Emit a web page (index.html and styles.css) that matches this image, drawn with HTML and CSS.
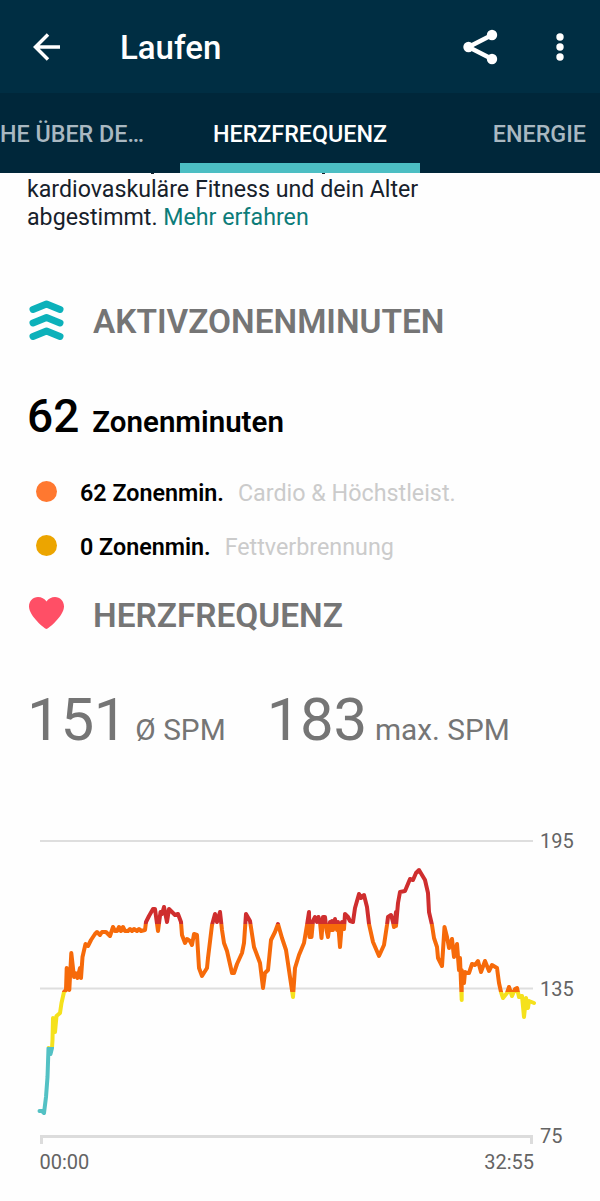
FILE: index.html
```
<!DOCTYPE html>
<html lang="de">
<head>
	<meta charset="UTF-8">
	<title>Laufen</title>
	<link rel="stylesheet" href="styles.css">
</head>
<body>
	<div class="header">
		<svg class="back" width="28" height="28" viewBox="0 0 28 28"><path d="M28 14H4M16 1.500L3.500 14L16 26.500"/></svg>
		<h1>Laufen</h1>
		<svg class="share" width="36" height="36" viewBox="0 0 36 36">
			<path d="M29 6L5.500 18L29 30"/>
			<circle cx="29" cy="6" r="5.200"/>
			<circle cx="5.500" cy="18" r="5.200"/>
			<circle cx="29" cy="30" r="5.200"/>
		</svg>
		<svg class="more" width="8" height="28" viewBox="0 0 8 28">
			<circle cx="4" cy="4" r="3.700"/>
			<circle cx="4" cy="14" r="3.700"/>
			<circle cx="4" cy="24" r="3.700"/>
		</svg>
	</div>
	<ul class="tabs">
		<li class="first">HE ÜBER DE…</li>
		<li class="current">HERZFREQUENZ</li>
		<li class="last">ENERGIE</li>
	</ul>
	<div class="content">
		<p class="info">kardiovaskuläre Fitness und dein Alter<br>abgestimmt. <a>Mehr erfahren</a></p>

		<div class="title zones">
			<svg width="40" height="44" viewBox="0 0 40 44">
				<path class="chevron" d="M6 10.500L19.500 5L33 10.500M6 24L19.500 18.500L33 24M6 37.500L19.500 32L33 37.500"/>
			</svg>
			<h2>AKTIVZONENMINUTEN</h2>
		</div>
		<p class="total"><b>62</b><span>Zonenminuten</span></p>
		<ul class="list">
			<li><i class="dot cardio"></i><b>62 Zonenmin.</b><span>Cardio &amp; Höchstleist.</span></li>
			<li><i class="dot fat"></i><b>0 Zonenmin.</b><span>Fettverbrennung</span></li>
		</ul>

		<div class="title heart">
			<svg width="40" height="36" viewBox="0 0 40 36">
				<path fill="#ff4f66" d="M19.500 33C18 33 2 20 2 10.500C2 5 6 1 11 1C14.500 1 17.500 2.500 19.500 5.500C21.500 2.500 24.500 1 28 1C33 1 37 5 37 10.500C37 20 21 33 19.500 33Z"/>
			</svg>
			<h2>HERZFREQUENZ</h2>
		</div>
		<div class="stats">
			<p><b>151</b><span>Ø SPM</span></p>
			<p><b>183</b><span>max. SPM</span></p>
		</div>

		<svg class="chart" width="600" height="371" viewBox="0 830 600 371">
			<defs>
				<!-- zone colours by heart rate -->
				<linearGradient id="zone" gradientUnits="userSpaceOnUse" x1="0" y1="824" x2="0" y2="1124">
					<stop offset="0.333" stop-color="#cf2e2e"/>
					<stop offset="0.333" stop-color="#f66a0a"/>
					<stop offset="0.560" stop-color="#f66a0a"/>
					<stop offset="0.560" stop-color="#f5e11c"/>
					<stop offset="0.743" stop-color="#f5e11c"/>
					<stop offset="0.743" stop-color="#53c1c4"/>
				</linearGradient>
			</defs>
			<path class="grid" d="M40 841H533M40 988.500H533"/>
			<path class="axis" d="M41.500 1144V1136.500H531.500V1144"/>
			<polyline class="rate" points="
				39.500,1111 42,1111 44,1113 46,1097 47.500,1077 48.500,1048 50.500,1054 52,1048
				52.500,1040 53,1018 55,1032 56.500,1016 60,1013 61.500,1003 64,992 66,990 66.700,968
				69.300,990 71.300,953 74,977 75.500,973 77.500,978 80,968 81,978 82.500,957 85.500,944
				88,946 91,940 95,934 97,932 100,935 102,932 106,932 110,936 113,927 115,931 117,931
				119,927 121,931 123,927 125,931 128,931 130,929 132,931 134,929 137,931 139,929 141,931
				145,930 146,922 149,916 153,909 155,909
				158,931 160.500,912 162,914 164,907 167,922 169,909 172,912 175,915 178,914 181,922
				182,935 185,943 187,939 190,941 192,945 194,934 197,935 199,968 202,976 207,968
				208,958 212,925 215,914 217,922 220,912 222,930 224,943 227,951 232,973 234,973
				237,964 242,953 244,943 246,914 250,921 254,947 260,963 263,988 265,973 268,970
				271,940 275,932 278,924 282,938 286,950 290,977 293,997 295,968 299,955 304,943
				307,925 309,912 309.500,937 311.500,937 313,921 315,917 317,922 318.500,917 320,922 321.500,938
				323,917 325,917 326.500,930 328,937 330,922 331,930 332,921 333,930 335,919 337,930 338,922 340,947
				342,922 344,929 345,914 348,917 350,921 353,922 355,908 359,894 361,898 364,895 367,907
				369,924 373,942 379,956 384,945 387,925 388,917 391,915 393,922 394,927 396,912 396,926 398,903
				400,892 405,891 410,879 413,880 416,873 419,870 422,875 425,880 428,893 429,912
				432,925 434,938 437,947 438,958 442,966 444.500,927 447,937 449,948 452,939 454,957
				457,944 459,970 460,958 461.700,1000 461.700,970 464,983 465,972 467,973 469,973 472,964 475,965 478,961
				481,972 485,961 489,971 492,965 497,968 499,983 501,992 503,998 507,993 509,987
				512,996 515,989 517,988 519,997 522,996 524,1017 526,998 528,1008 529,1001 534,1003"/>
			<g class="labels">
				<text x="540" y="848">195</text>
				<text x="540" y="995.500">135</text>
				<text x="540" y="1142.500">75</text>
				<text x="39.500" y="1168.500">00:00</text>
				<text x="534" y="1168.500" text-anchor="end">32:55</text>
			</g>
		</svg>
	</div>
</body>
</html>
```
FILE: styles.css
```
*{
	padding:0;
	margin:0;
	box-sizing: border-box;
}
body{
	width:600px;
	height:1201px;
	overflow: hidden;
	background:#fefefe;
	font-family: Roboto, "Liberation Sans", sans-serif;
	color:#000;
}
ul{
	list-style: none;
}
svg{
	display: block;
}
.header{
	display: flex;
	align-items: center;
	height:93px;
	padding:1px 36px 0 32px;
	background:#002e43;
	color:#fff;
}
.header svg{
	fill:#fff;
}
.header path{
	fill:none;
	stroke:#fff;
	stroke-width:3.5;
}
.header .share path{
	stroke-width:4.500;
}
.header h1{
	flex:1;
	padding:1px 0 0 60px;
	font-size: 33px;
	font-weight: 500;
}
.header .more{
	margin-left: 57px;
}
.tabs{
	display: flex;
	height:80px;
	background:#00273a;
	color:#a9b8c1;
	font-size: 23.3px;
	font-weight: 500;
	line-height: 82px;
	white-space: nowrap;
}
.tabs li{
	width:180px;
}
.tabs .current{
	width:240px;
	border-bottom:10px solid #4cbec3;
	color:#fff;
	text-align: center;
}
.tabs .last{
	padding-right: 14px;
	text-align: right;
}
.info{
	position: relative;
	height:122px;
	padding:3px 0 0 27px;
	font-size: 23.2px;
	line-height: 27.5px;
	color:#17212b;
}
/* tips of the line scrolled away under the tabs */
.info::before{
	content:"";
	position: absolute;
	left:151px;
	top:0;
	width:3px;
	height:1px;
	background:#17212b;
	box-shadow:171px 0 #17212b;
}
.info a{
	color:#0c7c79;
}
.title{
	display: flex;
	align-items: center;
	height:52px;
	padding-left: 27px;
	color:#757575;
}
.title h2{
	padding-left: 26px;
	font-size: 33.4px;
	font-weight: 600;
}
.chevron{
	fill:none;
	stroke:#0cb1ba;
	stroke-width:7;
	stroke-linecap: round;
	stroke-linejoin: round;
}
.total{
	display: flex;
	align-items: baseline;
	height:119px;
	padding:42px 0 0 27px;
	font-weight: 600;
}
.total b{
	font-size: 46px;
	font-weight: 500;
	line-height: 54px;
}
.total span{
	padding-left: 13px;
	font-size: 29.5px;
}
.list li{
	display: flex;
	align-items: center;
	height:54px;
	padding-left: 36px;
	font-size: 23.3px;
}
.list b{
	padding-left: 23px;
	font-weight: 600;
}
.list span{
	padding-left: 14px;
	color:#cbcbcb;
}
.dot{
	width:21px;
	height:21px;
	margin-bottom: 3px;
	border-radius: 50%;
	background:#ff7830;
}
.dot.fat{
	background:#eca500;
}
.heart{
	height:80px;
}
.heart h2{
	padding-top: 2px;
}
.stats{
	display: flex;
	gap:41px;
	height:176px;
	padding:30px 0 0 27px;
	color:#757575;
}
.stats b{
	font-size: 60px;
	font-weight: 400;
	letter-spacing: -0.3px;
}
.stats span{
	padding-left: 8px;
	font-size: 29.8px;
}
.grid{
	fill:none;
	stroke:#dedede;
	stroke-width:2;
}
.axis{
	fill:none;
	stroke:#dcdcdc;
	stroke-width:3;
}
.rate{
	fill:none;
	stroke:url(#zone);
	stroke-width:4;
	stroke-linecap: round;
	stroke-linejoin: round;
}
.labels{
	fill:#646464;
	font-size: 20px;
}
```
